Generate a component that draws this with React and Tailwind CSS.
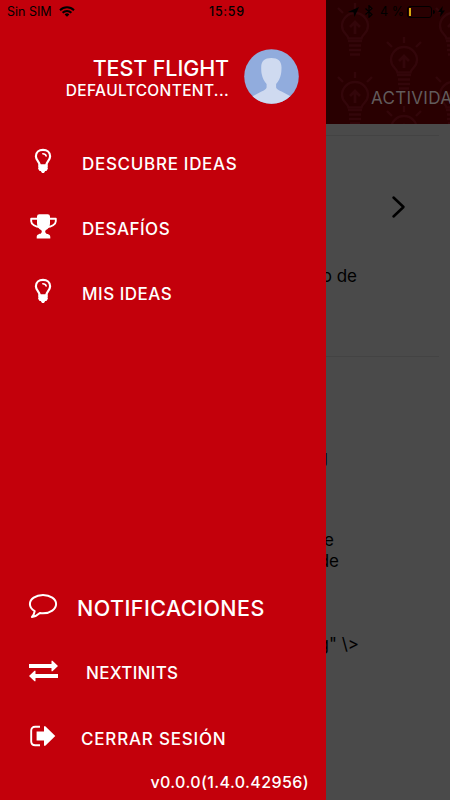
const BulbIcon = () => (
  <svg className="w-[18px] h-[26px]" viewBox="0 0 18 26" fill="none" stroke="white" strokeWidth="2.200">
    <path d="M5.700 17C5.500 13.600 1.900 12.200 1.900 8.200C1.900 4.400 5 1.900 9 1.900s7.100 2.500 7.100 6.300c0 4-3.600 5.400-3.800 8.800" />
    <path d="M8.800 5.800c1.800 0 3 .8 3.400 2.200" strokeWidth="1.500" strokeLinecap="round" />
    <path d="M4.500 16.200h9l.4 1.700-.3 1.300.3 1.600-1.500 2.200h-1.200L10 25H8l-1.200-2H5.600L4.100 20.800l.3-1.600-.3-1.300z" fill="white" stroke="none" />
  </svg>
);

const TrophyIcon = () => (
  <svg className="w-[27px] h-[25px]" viewBox="0 0 27 25" fill="white">
    <path d="M7 2.500Q7 .2 9.300.2h8.400Q20 .2 20 2.500v7c0 3.200-1.700 5.200-4 6.600-1.200.8-1 2.600.1 3.300 1.200.6 4.200.6 4.200 3.500v1.500H6.700v-1.500c0-2.900 3-2.900 4.200-3.500 1.100-.7 1.300-2.500.1-3.300-2.300-1.400-4-3.400-4-6.600z" />
    <path d="M7.500 4.700H1.200v2.600c0 3.100 4.200 5.700 9 5.700M19.500 4.700h6.300v2.600c0 3.100-4.200 5.700-9 5.700" fill="none" stroke="white" strokeWidth="1.900" strokeLinejoin="round" />
  </svg>
);

const CommentIcon = () => (
  <svg className="w-[30px] h-[26px]" viewBox="0 0 30 26" fill="none" stroke="white" strokeWidth="2" strokeLinejoin="round">
    <path d="M15 1.900c7.300 0 13.100 4.100 13.100 9.200S22.300 20.300 15 20.300c-1.100 0-2.100-.1-3.100-.3-2.300 2.200-5 3.500-8 3.900 1.400-1.400 2.400-3.100 2.800-5.800C3.700 16.500 1.900 13.900 1.900 11.100 1.900 6 7.700 1.900 15 1.900z" />
  </svg>
);

const ExchangeIcon = () => (
  <svg className="w-[29px] h-[22px]" viewBox="0 0 29 22" fill="white">
    <path d="M0 4h22.500V.8h1L29 6l-5.500 5.200h-1V8H0z" />
    <path d="M29 14H6.500v-3.200h-1L0 16l5.500 5.200h1V18H29z" />
  </svg>
);

const LogoutIcon = () => (
  <svg className="w-[26px] h-[22px]" viewBox="0 0 26 22" fill="white">
    <path d="M10 1.800H5.200Q1.200 1.800 1.200 5.800v10.400q0 4 4 4H10" fill="none" stroke="white" strokeWidth="1.900" />
    <path d="M6.600 6.600H14V1.200h1.300L25.300 11l-10 9.800H14v-5.400H6.600z" />
  </svg>
);

const PatternBulb = ({ x, y }) => (
  <g transform={`translate(${x} ${y})`}>
    <path d="M-6.500 12.500C-7 8.500-13 7-13 0a13 13 0 0 1 26 0c0 7-6 8.500-6.500 12.500z" />
    <path d="M0 8V-4M-5 1l5-5 5 5" strokeWidth="2.800" />
    <path d="M-7 15H7M-6 19.500H6M-6 24H6M-5 28.500H5" />
    <path d="M0-17v-6M-12-13l-5-5M12-13l5-5" />
  </g>
);

const bulbs = [
  [355, 26], [355, 95], [404, 60], [404, 129], [453, 26], [453, 95],
];

const Header = () => (
  <header className="relative h-[124px] bg-[#290001] overflow-hidden">
    <svg className="absolute inset-0" width="450" height="124" fill="none" stroke="#33060a" strokeWidth="2.400">
      {bulbs.map(([x, y]) => <PatternBulb key={`${x}-${y}`} x={x} y={y} />)}
    </svg>
    <p className="relative pt-[86px] pl-[371px] text-[17px] leading-6 tracking-[0.300px] whitespace-nowrap text-[#625c5c]">ACTIVIDAD</p>
  </header>
);

const Feed = () => (
  <div className="flex flex-col text-right text-[17px] leading-[21px] text-black">
    <div className="mt-[11px] mr-[11px] h-px bg-[#434343]" />
    <div className="mt-[59px] pr-[44px] flex justify-end">
      <svg width="15" height="24" viewBox="0 0 15 24" fill="none" stroke="black" strokeWidth="2.500" strokeLinecap="round" strokeLinejoin="round">
        <path d="M2.500 2.500L12.500 12l-10 9.500" />
      </svg>
    </div>
    <p className="mt-[47px] pr-[93px] h-[21px]">o de</p>
    <div className="mt-[69px] mr-[11px] h-px bg-[#434343]" />
    <p className="mt-[90px] pr-[122px]">g</p>
    <p className="mt-[62px] pr-[116px]">e</p>
    <p className="pr-[111px]">de</p>
    <p className="mt-[62px] pr-[91px]">g" \&gt;</p>
  </div>
);

const StatusBar = () => (
  <div className="absolute inset-x-0 top-0 h-[23px] flex items-center text-[12.500px] leading-none text-black">
    <span className="w-[52px] pl-[7px] pt-px whitespace-nowrap">Sin SIM</span>
    <svg className="ml-[7px] w-[16px] h-[11px]" viewBox="0 0 16 11" fill="none" stroke="black" strokeWidth="2">
      <path d="M1 4.200a10 10 0 0 1 14 0M3.600 6.800a6.200 6.200 0 0 1 8.800 0" />
      <path d="M8 10.800L5.600 8.500a3.400 3.400 0 0 1 4.800 0z" fill="black" stroke="none" />
    </svg>
    <span className="ml-[134px] w-[60px] pt-px font-medium tracking-[0.700px]">15:59</span>
    <svg className="ml-[79px] w-[11px] h-[10px]" viewBox="0 0 11 10">
      <path d="M0 5L11 0 6.500 10 5.500 5.300z" />
    </svg>
    <svg className="ml-[6px] w-[8px] h-[13px]" viewBox="0 0 8 13" fill="none" stroke="black" strokeWidth="1.200">
      <path d="M.5 3.500l6.500 6L4 12.300V.7L7 3.500l-6.500 6" />
    </svg>
    <span className="ml-[7px] w-[24px] pt-px whitespace-nowrap tracking-[0.100px]">4 %</span>
    <div className="ml-[3px] w-[25px] h-[12px] rounded-[3px] border border-black p-px">
      <div className="w-[2px] h-full bg-[#d6a90f]" />
    </div>
    <div className="ml-px w-[2px] h-[4px] rounded-r bg-black" />
    <svg className="ml-[3px] w-[7px] h-[11px]" viewBox="0 0 7 11">
      <path d="M4.800 0L0 6h2.800L2 11l5-6.500H4z" />
    </svg>
  </div>
);

const Avatar = () => (
  <svg className="w-[55px] h-[55px]" viewBox="0 0 55 55">
    <clipPath id="avatar"><circle cx="27.500" cy="27.500" r="27.300" /></clipPath>
    <g clipPath="url(#avatar)">
      <path d="M0 0h55v55H0z" fill="#91acdd" />
      <path d="M27.300 9c6.500 0 10.200 3 10.200 9.200 0 3-.1 4.500-.5 6.800-.8 4.500-2.700 7.500-4.900 10v3.500c.5 1.700 3 3 5.500 4.100L47 47.500V56H8v-8.500l9.500-4.900c2.500-1.100 4.600-2.400 5.100-4.100V35c-2.200-2.500-4.100-5.500-4.900-10-.4-2.300-.5-3.800-.5-6.800C17.200 12 20.800 9 27.300 9z" fill="#cfdaf0" />
    </g>
  </svg>
);

const MenuItem = ({ icon, children, className }) => (
  <div className="h-[65px] flex items-center">
    <div className="w-[86px] pb-[5px] flex justify-center shrink-0">{icon}</div>
    <span className={`whitespace-nowrap ${className}`}>{children}</span>
  </div>
);

const Drawer = () => (
  <aside className="absolute inset-y-0 left-0 w-[326px] bg-[#c3000b] text-white font-medium flex flex-col">
    <div className="pt-[49px] pr-[27px] h-[131px] flex justify-end items-start">
      <div className="mr-[15px] pt-[6px] text-right whitespace-nowrap">
        <p className="text-[21.500px] leading-[26px] tracking-[-0.100px]">TEST FLIGHT</p>
        <p className="pt-px text-[15.500px] leading-[18px] tracking-[0.350px]">DEFAULTCONTENT...</p>
      </div>
      <Avatar />
    </div>
    <nav>
      <MenuItem icon={<BulbIcon />} className="-ml-[4px] pt-[2px] text-[17px] tracking-[0.700px]">DESCUBRE IDEAS</MenuItem>
      <MenuItem icon={<TrophyIcon />} className="-ml-[4px] pt-[2px] text-[17px] tracking-[0.500px]">DESAFÍOS</MenuItem>
      <MenuItem icon={<BulbIcon />} className="-ml-[4px] pt-[2px] text-[17px] tracking-[0.500px]">MIS IDEAS</MenuItem>
    </nav>
    <nav className="mt-auto">
      <MenuItem icon={<CommentIcon />} className="-ml-[9px] text-[21.500px] tracking-[0.450px]">NOTIFICACIONES</MenuItem>
      <MenuItem icon={<ExchangeIcon />} className="pt-px text-[17px] tracking-[0.300px]">NEXTINITS</MenuItem>
      <MenuItem icon={<LogoutIcon />} className="-ml-[5px] pt-[2px] text-[17px] tracking-[0.800px]">CERRAR SESIÓN</MenuItem>
    </nav>
    <p className="h-[29px] pr-[17px] text-right text-[16px] leading-[23px] tracking-[0.400px]">v0.0.0(1.4.0.42956)</p>
  </aside>
);

export default function App() {
  return (
    <div className="relative w-[450px] h-[800px] overflow-hidden bg-[#4a4a4a] font-['Inter',sans-serif]">
      <Header />
      <Feed />
      <Drawer />
      <StatusBar />
    </div>
  );
}
